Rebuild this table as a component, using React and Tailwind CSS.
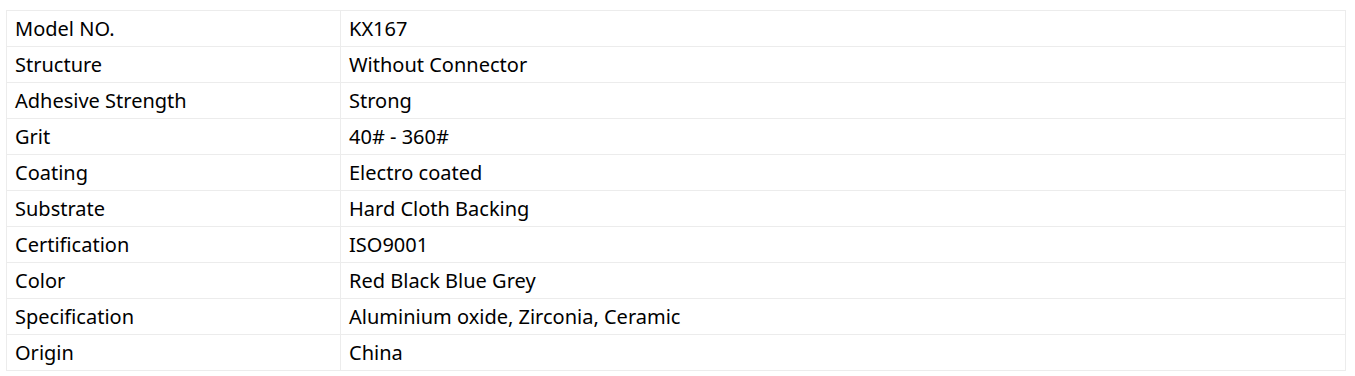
const ROWS = [
  ['Model NO.', 'KX167'],
  ['Structure', 'Without Connector'],
  ['Adhesive Strength', 'Strong'],
  ['Grit', '40# - 360#'],
  ['Coating', 'Electro coated'],
  ['Substrate', 'Hard Cloth Backing'],
  ['Certification', 'ISO9001'],
  ['Color', 'Red Black Blue Grey'],
  ['Specification', 'Aluminium oxide, Zirconia, Ceramic'],
  ['Origin', 'China'],
];

export default function App() {
  return (
    <div className="bg-white pt-[10px] pl-[6px] pr-[9px] pb-[6px]">
      <table
        className="w-[1340px] border-collapse text-[20px] text-black"
        style={{ fontFamily: "'Noto Sans', 'Open Sans', sans-serif" }}
      >
        <tbody>
          {ROWS.map(([k, v]) => (
            <tr key={k} className="h-[36px]">
              <td className="w-[334px] border border-[#ececec] px-[8px] py-0 leading-[35px]">{k}</td>
              <td className="border border-[#ececec] px-[8px] py-0 leading-[35px]">{v}</td>
            </tr>
          ))}
        </tbody>
      </table>
    </div>
  );
}
